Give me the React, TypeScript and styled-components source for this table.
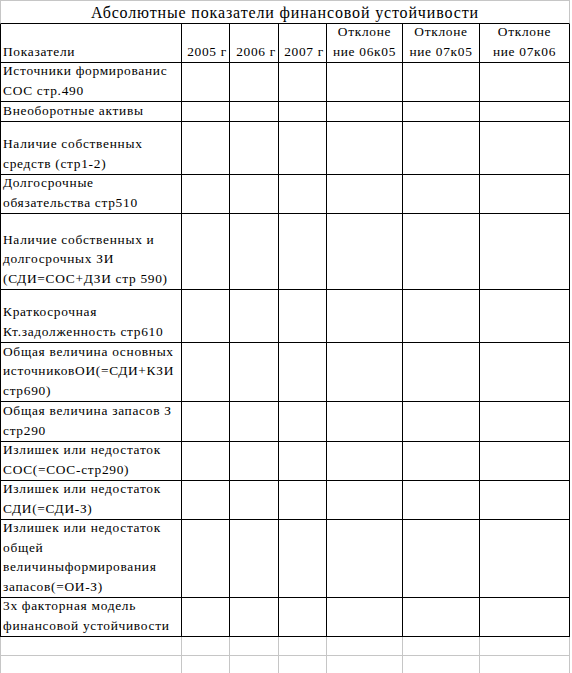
import React from "react"
import styled, { createGlobalStyle } from "styled-components"

const GlobalStyle = createGlobalStyle`
  html, body {
    margin: 0;
    padding: 0;
    background: #ffffff;
  }
  body {
    font-family: "Liberation Serif", "Times New Roman", serif;
    color: #000000;
  }
`

const black = "#000000"
const grid = "#c6c6c6"

const widths = [182, 48, 49, 48, 76, 77, 90]

const rows: { lines: string[]; height: number }[] = [
  { lines: ["Источники формированис", "СОС стр.490"], height: 39 },
  { lines: ["Внеоборотные активы"], height: 20 },
  { lines: ["Наличие собственных", "средств (стр1-2)"], height: 53 },
  { lines: ["Долгосрочные", "обязательства стр510"], height: 39 },
  {
    lines: ["Наличие собственных и", "долгосрочных ЗИ", "(СДИ=СОС+ДЗИ стр 590)"],
    height: 76,
  },
  { lines: ["Краткосрочная", "Кт.задолженность стр610"], height: 53 },
  {
    lines: ["Общая величина основных", "источниковОИ(=СДИ+КЗИ", "стр690)"],
    height: 59,
  },
  { lines: ["Общая величина запасов З", "стр290"], height: 40 },
  { lines: ["Излишек или недостаток", "СОС(=СОС-стр290)"], height: 39 },
  { lines: ["Излишек или недостаток", "СДИ(=СДИ-З)"], height: 39 },
  {
    lines: [
      "Излишек или недостаток",
      "общей",
      "величиныформирования",
      "запасов(=ОИ-З)",
    ],
    height: 78,
  },
  { lines: ["3х факторная модель", "финансовой устойчивости"], height: 39 },
]

type Align = "left" | "right" | "center"

const headers: { lines: string[]; align: Align }[] = [
  { lines: ["Показатели"], align: "left" },
  { lines: ["2005 г"], align: "right" },
  { lines: ["2006 г"], align: "right" },
  { lines: ["2007 г"], align: "right" },
  { lines: ["Отклоне", "ние 06к05"], align: "center" },
  { lines: ["Отклоне", "ние 07к05"], align: "center" },
  { lines: ["Отклоне", "ние 07к06"], align: "center" },
]

const App = () => {
  return (
    <>
      <GlobalStyle />
      <Sheet>
        <TitleCell>Абсолютные показатели финансовой устойчивости</TitleCell>

        {headers.map((h, i) => (
          <Cell key={"h" + i} $h={39} $first={i === 0} $align={h.align}>
            {h.lines.map((l) => (
              <Line key={l}>{l}</Line>
            ))}
          </Cell>
        ))}

        {rows.map((r, ri) =>
          widths.map((_, ci) => (
            <Cell key={ri + "-" + ci} $h={r.height} $first={ci === 0} $align="left">
              {ci === 0 && r.lines.map((l) => <Line key={l}>{l}</Line>)}
            </Cell>
          ))
        )}

        {[19, 18].map((h, ri) =>
          widths.map((_, ci) => (
            <Cell
              key={"e" + ri + "-" + ci}
              $h={h}
              $first={ci === 0}
              $align="left"
              $color={grid}
            />
          ))
        )}
      </Sheet>
    </>
  )
}

export default App

const Sheet = styled.div`
  display: grid;
  grid-template-columns: ${widths.map((w) => w + "px").join(" ")};
  width: ${widths.reduce((a, b) => a + b, 0) + 1}px;
`

const TitleCell = styled.div`
  grid-column: 1 / -1;
  box-sizing: border-box;
  height: 24px;
  border: 1px solid ${grid};
  border-bottom-color: ${black};
  padding-top: 2px;
  font-size: 16px;
  line-height: 20px;
  text-align: center;
  letter-spacing: 0.85px;
  white-space: nowrap;
`

const Cell = styled.div<{
  $h: number
  $first: boolean
  $align: Align
  $color?: string
}>`
  box-sizing: border-box;
  height: ${(p) => p.$h}px;
  display: flex;
  flex-direction: column;
  justify-content: flex-end;
  align-items: ${(p) =>
    p.$align === "left" ? "flex-start" : p.$align === "right" ? "flex-end" : "center"};
  border-right: 1px solid ${(p) => p.$color || black};
  border-bottom: 1px solid ${(p) => p.$color || black};
  border-left: ${(p) => (p.$first ? `1px solid ${p.$color || black}` : "none")};
  padding: 0 2px 1px 2px;
  font-size: 13.4px;
  letter-spacing: 0.7px;
`

const Line = styled.span`
  display: block;
  line-height: 19.5px;
  white-space: nowrap;
`
